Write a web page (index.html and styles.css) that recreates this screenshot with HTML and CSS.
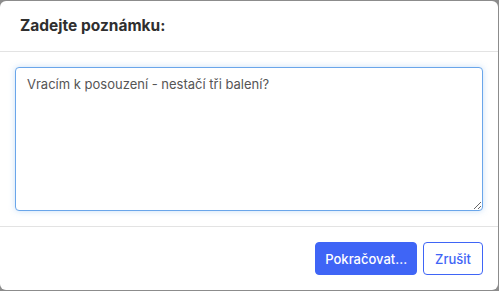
FILE: index.html
```html
<!DOCTYPE html>
<html lang="cs">
<head>
  <meta charset="UTF-8">
  <meta name="viewport" content="width=device-width, initial-scale=1.0">
  <title>Poznámka</title>
  <link rel="stylesheet" href="styles.css">
</head>
<body>
  <div class="modal">
    <div class="modal-header">
      <h2 class="modal-title">Zadejte poznámku:</h2>
    </div>
    <div class="modal-body">
      <textarea class="note-input">Vracím k posouzení - nestačí tři balení?</textarea>
    </div>
    <div class="modal-footer">
      <button type="button" class="btn btn-primary">Pokračovat...</button>
      <button type="button" class="btn btn-outline">Zrušit</button>
    </div>
  </div>
</body>
</html>
```

FILE: styles.css
```css
/* Global Styles */
* {
  margin: 0;
  padding: 0;
  box-sizing: border-box;
}

body {
  font-family: Inter, "Noto Sans", sans-serif;
  background-color: #8c8c8c;
  color: #333;
  padding-top: 1px;
  height: 291px;
  overflow: hidden;
}

.modal {
  width: 498px;
  height: 289px;
  background: #fff;
  border-radius: 6px;
  display: flex;
  flex-direction: column;
}

.modal-header {
  padding: 13px 20px;
  border-bottom: 1px solid #e3e3e3;
}

.modal-title {
  font-size: 15.5px;
  line-height: 24px;
  font-weight: 700;
  color: #2f2f2f;
}

.modal-body {
  padding: 15px;
}

.note-input {
  display: block;
  width: 100%;
  height: 144px;
  padding: 6px 11px;
  font-family: Inter, "Noto Sans", sans-serif;
  font-size: 13px;
  line-height: 20px;
  color: #555;
  border: 1px solid #6aa6ea;
  border-radius: 4px;
  box-shadow: 0 0 6px rgba(102, 165, 235, 0.35);
  outline: none;
  resize: vertical;
}

.modal-footer {
  border-top: 1px solid #e3e3e3;
  padding: 15px;
  display: flex;
  justify-content: flex-end;
  gap: 6px;
}

.btn {
  height: 33px;
  font-family: Inter, "Noto Sans", sans-serif;
  font-size: 13px;
  font-weight: 500;
  border-radius: 4px;
  cursor: pointer;
}

.btn-primary {
  padding: 0 9px;
  background-color: #3f65f6;
  border: 1px solid #3f65f6;
  color: #fff;
}

.btn-outline {
  padding: 0 11px;
  background-color: #fff;
  border: 1px solid #3f65f6;
  color: #3f65f6;
}
```
